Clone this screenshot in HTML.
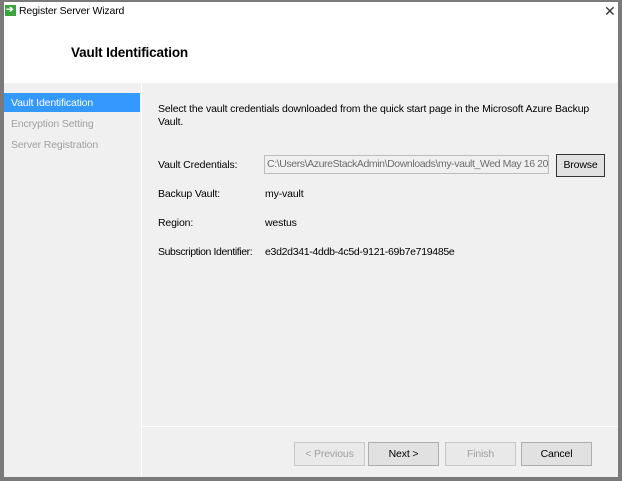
<!DOCTYPE html>
<html><head><style>
*{margin:0;padding:0;box-sizing:border-box}
body{width:622px;height:481px;background:#7a7a7a;font-family:"Liberation Sans",sans-serif;font-size:10.5px;letter-spacing:-0.15px;color:#000;position:relative;overflow:hidden}
.win{position:absolute;left:4px;top:2px;width:614px;height:475px;background:#f0f0f0}
.abs{position:absolute;white-space:nowrap}
.btn{position:absolute;top:440px;height:24px;width:71px;border:1px solid #adadad;background:#e1e1e1;text-align:center;line-height:22px}
.dis{color:#a0a0a0;border-color:#c8c8c8;background:#e9e9e9}
</style></head><body>
<div class="win">
 <div class="abs" style="left:0;top:0;width:614px;height:81px;background:#fff"></div>
 <div class="abs" style="left:1px;top:3px;width:11px;height:11px;background:#3aa53a"></div>
 <div class="abs" style="left:2px;top:2px;color:#fff;font-size:9px;font-weight:bold">➔</div>
 <div class="abs" style="left:15px;top:3px">Register Server Wizard</div>
 <div class="abs" style="left:600px;top:1px;font-size:14px;font-weight:100;color:#333">✕</div>
 <div class="abs" style="left:67px;top:43px;font-size:13.5px;font-weight:bold">Vault Identification</div>
 <div class="abs" style="left:0;top:91px;width:136px;height:19px;background:#3399ff;color:#fff;padding:4px 0 0 7px">Vault Identification</div>
 <div class="abs" style="left:7px;top:116px;color:#a0a0a0">Encryption Setting</div>
 <div class="abs" style="left:7px;top:137px;color:#a0a0a0">Server Registration</div>
 <div class="abs" style="left:137px;top:81px;width:1px;height:394px;background:#fff"></div>
 <div class="abs" style="left:138px;top:424px;width:476px;height:1px;background:#fff"></div>
 <div class="abs" style="left:154px;top:101px;line-height:13px">Select the vault credentials downloaded from the quick start page in the Microsoft Azure Backup<br>Vault.</div>
 <div class="abs" style="left:154px;top:157px">Vault Credentials:</div>
 <div class="abs" style="left:260px;top:153px;width:285px;height:19px;border:1px solid #bcbcbc;background:#f0f0f0;color:#6d6d6d;padding:2px 0 0 2px;overflow:hidden;letter-spacing:-0.4px">C:\Users\AzureStackAdmin\Downloads\my-vault_Wed May 16 201</div>
 <div class="abs" style="left:552px;top:152px;width:49px;height:23px;border:1px solid #333;background:#e1e1e1;text-align:center;line-height:21px">Browse</div>
 <div class="abs" style="left:154px;top:186px">Backup Vault:</div>
 <div class="abs" style="left:261px;top:186px">my-vault</div>
 <div class="abs" style="left:154px;top:215px">Region:</div>
 <div class="abs" style="left:261px;top:215px">westus</div>
 <div class="abs" style="left:154px;top:244px;letter-spacing:-0.4px">Subscription Identifier:</div>
 <div class="abs" style="left:261px;top:244px;letter-spacing:-0.3px">e3d2d341-4ddb-4c5d-9121-69b7e719485e</div>
 <div class="btn dis" style="left:290px">&lt; Previous</div>
 <div class="btn" style="left:364px">Next &gt;</div>
 <div class="btn dis" style="left:441px">Finish</div>
 <div class="btn" style="left:517px">Cancel</div>
</div>
</body></html>
